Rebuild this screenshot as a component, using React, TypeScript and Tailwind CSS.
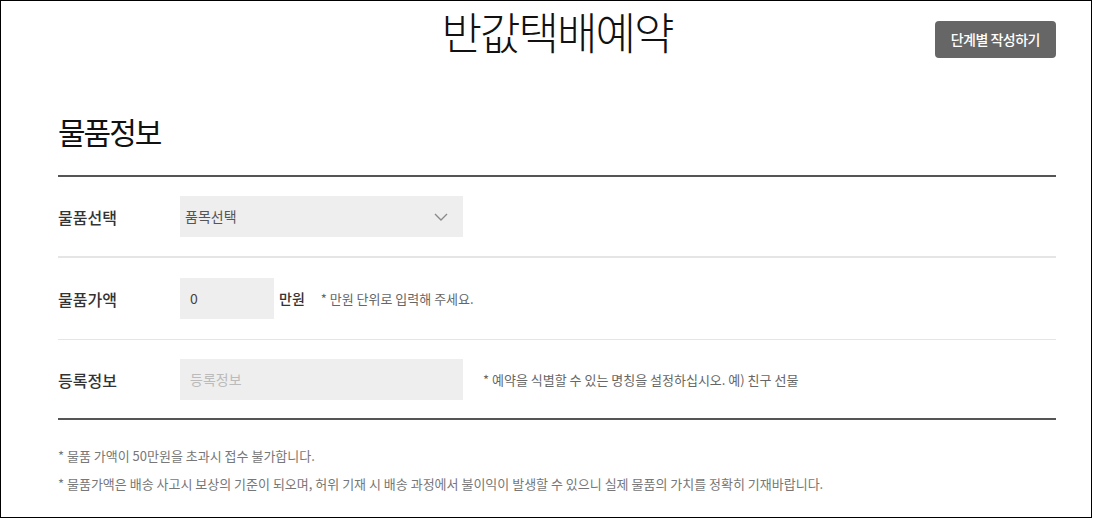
import React from "react";

const F = { fontFamily: '"Noto Sans CJK KR", "Noto Sans", sans-serif' };

function Chevron() {
  return (
    <svg width="14" height="8" viewBox="0 0 14 8" fill="none">
      <path d="M1 1 L7 7 L13 1" stroke="#8a8a8a" strokeWidth="1.4" />
    </svg>
  );
}

export default function App() {
  return (
    <div
      className="w-[1092px] h-[518px] border border-black bg-white text-[#333] box-border"
      style={F}
    >
      <div className="w-[998px] ml-[57px]">
        {/* header */}
        <div className="grid grid-cols-[1fr_auto_1fr] h-[80px]">
          <div />
          <h1 className="text-[44px] font-light leading-none tracking-[-2px] text-[#111] pt-[8px]">
            반값택배예약
          </h1>
          <div className="flex justify-end pt-[20px]">
            <button className="h-[37px] px-[16px] rounded-[4px] bg-[#666] text-white text-[14px] font-medium tracking-[-0.5px]">
              단계별 작성하기
            </button>
          </div>
        </div>
        <h2 className="mt-[35px] text-[30px] font-normal leading-none tracking-[-2px] text-[#111]">
          물품정보
        </h2>
        <div className="mt-[29px] border-t-2 border-[#555]">
          <div className="flex items-center pt-[19px] pb-[19px]">
            <div className="w-[122px] text-[16px] font-medium">물품선택</div>
            <div className="w-[283px] h-[41px] bg-[#eee] flex items-center justify-between pl-[5px] pr-[15px]">
              <span className="text-[14px] text-[#555]">품목선택</span>
              <Chevron />
            </div>
          </div>
          <div className="border-t-2 border-[#e5e5e5]" />
          <div className="flex items-center pt-[20px] pb-[20px]">
            <div className="w-[122px] text-[16px] font-medium">물품가액</div>
            <div className="w-[94px] h-[41px] bg-[#eee] flex items-center pl-[10px] text-[14px] text-[#444]">
              0
            </div>
            <span className="ml-[5px] text-[14px] font-medium text-[#333]">만원</span>
            <span className="ml-[16px] text-[13px] text-[#666]">
              * 만원 단위로 입력해 주세요.
            </span>
          </div>
          <div className="border-t border-[#e5e5e5]" />
          <div className="flex items-center pt-[19px] pb-[18px]">
            <div className="w-[122px] text-[16px] font-medium">등록정보</div>
            <div className="w-[283px] h-[41px] bg-[#eee] flex items-center pl-[10px] text-[14px] text-[#bbb]">
              등록정보
            </div>
            <span className="ml-[20px] text-[13px] text-[#666]">
              * 예약을 식별할 수 있는 명칭을 설정하십시오. 예) 친구 선물
            </span>
          </div>
        </div>
        <div className="border-t-2 border-[#555]" />
        <div className="mt-[22px] text-[13px] text-[#777] leading-[28px]">
          <p>* 물품 가액이 50만원을 초과시 접수 불가합니다.</p>
          <p>
            * 물품가액은 배송 사고시 보상의 기준이 되오며, 허위 기재 시 배송 과정에서 불이익이 발생할 수 있으니 실제 물품의 가치를 정확히 기재바랍니다.
          </p>
        </div>
      </div>
    </div>
  );
}
